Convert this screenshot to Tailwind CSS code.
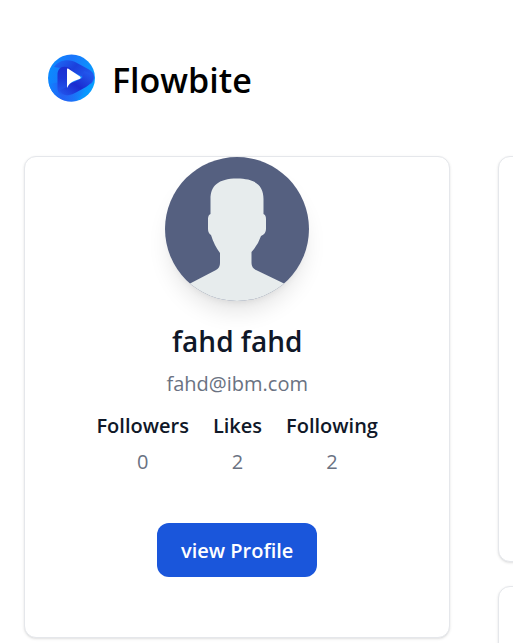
<!DOCTYPE html>
<html lang="en">
<head>
<meta charset="utf-8">
<meta name="viewport" content="width=device-width, initial-scale=1">
<title>Flowbite</title>
<script src="https://cdn.jsdelivr.net/npm/@tailwindcss/browser@4"></script>
</head>
<body class="min-h-screen overflow-hidden bg-white font-['Open_Sans','Noto_Sans',sans-serif] text-gray-900">
<header class="px-12 pt-12">
  <a href="#" class="flex h-15 items-center gap-4">
    <svg class="size-12 shrink-0" viewBox="0 0 48 48" aria-hidden="true">
      <defs>
        <linearGradient id="disc" x1="0" y1="0.3" x2="1" y2="0.6"><stop offset="0" stop-color="#0a8cff"/><stop offset=".4" stop-color="#1b74fb"/><stop offset="1" stop-color="#05a0ff"/></linearGradient>
        <linearGradient id="foot" x1="0" y1="0" x2="1" y2="0"><stop offset="0" stop-color="#0f83ff"/><stop offset=".35" stop-color="#2461f4"/><stop offset="1" stop-color="#2461f4" stop-opacity="0"/></linearGradient>
        <linearGradient id="arm" x1="0" y1="0" x2="0" y2="1"><stop offset="0" stop-color="#1b2fd2"/><stop offset=".4" stop-color="#1b38d8"/><stop offset="1" stop-color="#2462f4"/></linearGradient>
        <linearGradient id="roof" x1="0" y1="0" x2="1" y2="0.6"><stop offset="0" stop-color="#1f6df8"/><stop offset=".5" stop-color="#1b40dc"/><stop offset="1" stop-color="#235cf0"/></linearGradient>
        <linearGradient id="base" x1="1" y1="0" x2="0" y2="1"><stop offset="0" stop-color="#2463f4"/><stop offset=".55" stop-color="#1a2bcf"/><stop offset="1" stop-color="#2258ee"/></linearGradient>
      </defs>
      <circle cx="23.500" cy="24" r="23.500" fill="url(#disc)"/>
      <path d="M1 30C4 43 17 50 29 47L38 36L12 28Z" fill="url(#foot)"/>
      <path d="M6 13C12 5 22 5 29 9L41 15.500C47 19 48 25 43 30L35 23L19 15Z" fill="url(#roof)"/>
      <path d="M9.500 21C9.500 13 15 11 22 14L24 17L19 16V34L25 40C18 44 9.500 42 9.500 34Z" fill="url(#arm)"/>
      <path d="M45 21C46 26 43 30 38 33L27 39C19 43 13 41 12 36L19 33Q21 29 26 28L34 24L36 17Z" fill="url(#base)"/>
      <path d="M20 14.500L32 22.500Q33.500 24 31.500 25L26 27Q21 29 19 34V15.500Q19 14 20 14.500Z" fill="#fff"/>
    </svg>
    <span class="pt-1 text-[34px] leading-11 font-semibold text-black">Flowbite</span>
  </a>
</header>
<main class="mt-12 flex items-start gap-12 pl-6">
  <section class="flex shrink-0 basis-[87.2%] flex-col items-center rounded-xl border border-gray-200 bg-white pb-15 shadow">
    <svg class="size-36 rounded-full shadow-[0_15px_22px_-4px_rgb(0_0_0/0.1),0_6px_9px_-6px_rgb(0_0_0/0.1)]" viewBox="0 0 144 144" role="img" aria-label="fahd fahd">
      <rect width="144" height="144" fill="#556080"/>
      <path d="M0 144V138L26 126L51 113Q55 111 55 106V96Q49 88 46 78Q43 76 43 72V62Q43 58 45.500 57V42C45.500 29 53 21.500 72 21.500S98.500 29 98.500 42V57Q101 58 101 62V72Q101 77 96 79Q93 88 86.500 95V106Q86.500 111 91 113L118 126L144 138V144Z" fill="#e7eced"/>
    </svg>
    <h1 class="mt-5 text-[28px] leading-10 font-semibold">fahd fahd</h1>
    <p class="mt-[7px] text-xl leading-8 text-gray-500">fahd@ibm.com</p>
    <dl class="mt-2 flex gap-6 text-center text-xl leading-9">
      <div><dt class="font-semibold">Followers</dt><dd class="text-gray-500">0</dd></div>
      <div><dt class="font-semibold">Likes</dt><dd class="text-gray-500">2</dd></div>
      <div><dt class="font-semibold">Following</dt><dd class="text-gray-500">2</dd></div>
    </dl>
    <button type="button" class="mt-[43px] rounded-xl bg-[#1a56db] px-6 pt-[13px] pb-[11px] text-xl leading-[30px] font-semibold text-white">view Profile</button>
  </section>
  <aside class="flex min-w-64 flex-1 flex-col gap-6">
    <div class="h-[406px] rounded-xl border border-gray-200 bg-white shadow"></div>
    <div class="h-[406px] rounded-xl border border-gray-200 bg-white shadow"></div>
  </aside>
</main>
</body>
</html>
